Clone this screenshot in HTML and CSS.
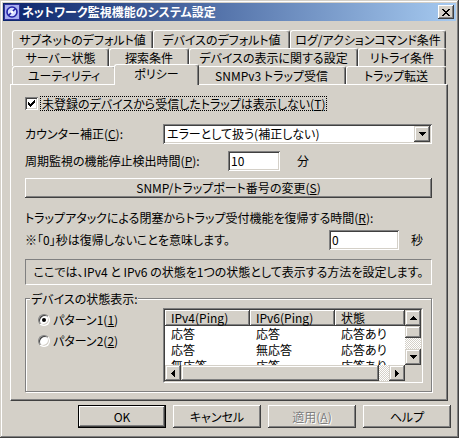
FILE: index.html
```html
<!DOCTYPE html>
<html lang="ja">
<head>
<meta charset="utf-8">
<title>ネットワーク監視機能のシステム設定</title>
<link rel="stylesheet" href="styles.css">
</head>
<body>
<div class="window">
  <div class="titlebar">
    <svg class="app-icon" viewBox="0 0 16 16" width="16" height="16">
      <rect x="0.5" y="0.5" width="15" height="15" fill="#a8aef0" stroke="#30309a"/>
      <circle cx="8" cy="8" r="5" fill="#d6dcff" stroke="#2424a8" stroke-width="1.6"/>
      <path d="M4.5 11.5 L11.5 4.5" stroke="#2424a8" stroke-width="1.6"/>
      <circle cx="8" cy="8" r="1.6" fill="#ffffff"/>
    </svg>
    <span class="title">ネットワーク監視機能のシステム設定</span>
    <span class="close-btn">
      <svg viewBox="0 0 8 7" width="8" height="7"><path d="M0 0h2v1h1v1h2V1h1V0h2v1H7v1H6v1H5v1h1v1h1v1h1v1H6V6H5V5H3v1H2v1H0V6h1V5h1V4h1V3H2V2H1V1H0Z" fill="#000"/></svg>
    </span>
  </div>
  <div class="client">
    <div class="tabs">
      <div class="tab-row">
        <div class="tab w141">サブネットのデフォルト値</div>
        <div class="tab w137">デバイスのデフォルト値</div>
        <div class="tab w156">ログ/アクションコマンド条件</div>
      </div>
      <div class="tab-row">
        <div class="tab w97">サーバー状態</div>
        <div class="tab w80">探索条件</div>
        <div class="tab w169">デバイスの表示に関する設定</div>
        <div class="tab w88">リトライ条件</div>
      </div>
      <div class="tab-row">
        <div class="tab w104">ユーティリティ</div>
        <div class="tab w81 selected">ポリシー</div>
        <div class="tab w149">SNMPv3 トラップ受信</div>
        <div class="tab w100">トラップ転送</div>
      </div>
    </div>

    <div class="panel">
      <div class="check-row">
        <span class="checkbox">
          <svg viewBox="0 0 7 7" width="7" height="7"><path d="M0 2h1v3H0Z M1 3h1v3H1Z M2 4h1v3H2Z M3 3h1v3H3Z M4 2h1v3H4Z M5 1h1v3H5Z M6 0h1v3H6Z" fill="#000"/></svg>
        </span>
        <span class="check-label">未登録のデバイスから受信したトラップは表示しない(<u>T</u>)</span>
      </div>

      <div class="form-row combo-row">
        <span class="lbl lbl-combo">カウンター補正(<u>C</u>):</span>
        <div class="combo">
          <span class="combo-text">エラーとして扱う(補正しない)</span>
          <span class="sb-btn combo-btn">
            <svg viewBox="0 0 7 4" width="7" height="4"><path d="M0 0h7v1h-1v1h-1v1h-1v1H3V3H2V2H1V1H0Z" fill="#000"/></svg>
          </span>
        </div>
      </div>

      <div class="form-row period-row">
        <span class="lbl lbl-period">周期監視の機能停止検出時間(<u>P</u>):</span>
        <div class="field f-period">10</div>
        <span class="unit-min">分</span>
      </div>

      <div class="btn wide-btn">SNMP/トラップポート番号の変更(<u>S</u>)</div>

      <div class="text-line">トラップアタックによる閉塞からトラップ受付機能を復帰する時間(<u>R</u>):</div>

      <div class="form-row recover-row">
        <span class="lbl lbl-recover">※「0」秒は復帰しないことを意味します。</span>
        <div class="field f-recover">0</div>
        <span class="unit-sec">秒</span>
      </div>

      <div class="info">ここでは、IPv4 と IPv6 の状態を1つの状態として表示する方法を設定します。</div>

      <div class="group">
        <div class="group-title">デバイスの状態表示:</div>
        <div class="group-body">
          <div class="radios">
            <div class="radio-row"><span class="radio checked"></span><span class="radio-label">パターン1(<u>1</u>)</span></div>
            <div class="radio-row"><span class="radio"></span><span class="radio-label">パターン2(<u>2</u>)</span></div>
          </div>
          <div class="lv">
            <div class="lv-inner">
              <div class="lv-body">
                <div class="lv-head">
                  <span>IPv4(Ping)</span><span>IPv6(Ping)</span><span>状態</span>
                </div>
                <div class="lv-row"><span>応答</span><span>応答</span><span>応答あり</span></div>
                <div class="lv-row"><span>応答</span><span>無応答</span><span>応答あり</span></div>
                <div class="lv-row"><span>無応答</span><span>応答</span><span>応答あり</span></div>
              </div>
              <div class="vscroll">
                <span class="sb-btn sb-v">
                  <svg viewBox="0 0 7 4" width="7" height="4"><path d="M3 0h1v1h1v1h1v1h1v1H0V3h1V2h1V1h1Z" fill="#000"/></svg>
                </span>
                <span class="sb-thumb v-thumb"></span>
                <span class="sb-track"></span>
                <span class="sb-btn sb-v">
                  <svg viewBox="0 0 7 4" width="7" height="4"><path d="M0 0h7v1h-1v1h-1v1h-1v1H3V3H2V2H1V1H0Z" fill="#000"/></svg>
                </span>
              </div>
              <div class="hscroll">
                <span class="sb-btn sb-h">
                  <svg viewBox="0 0 4 7" width="4" height="7"><path d="M0 3v1h1v1h1v1h1v1h1V0H3v1H2v1H1v1Z" fill="#000"/></svg>
                </span>
                <span class="sb-thumb h-thumb"></span>
                <span class="sb-track"></span>
                <span class="sb-btn sb-h">
                  <svg viewBox="0 0 4 7" width="4" height="7"><path d="M0 0v7h1V6h1V5h1V4h1V3H3V2H2V1H1V0Z" fill="#000"/></svg>
                </span>
              </div>
              <div class="corner"></div>
            </div>
          </div>
        </div>
      </div>
    </div>

    <div class="buttons">
      <div class="btn dlg-btn default">OK</div>
      <div class="btn dlg-btn">キャンセル</div>
      <div class="btn dlg-btn disabled">適用(<u>A</u>)</div>
      <div class="btn dlg-btn">ヘルプ</div>
    </div>
  </div>
</div>
</body>
</html>
```

FILE: styles.css
```css
* { box-sizing: border-box; }
html, body { margin: 0; padding: 0; }
body {
  width: 459px;
  height: 438px;
  overflow: hidden;
  background: #d4d0c8;
  font-family: "Noto Sans CJK JP", "Noto Sans", sans-serif;
  font-size: 12px;
  line-height: 14px;
  color: #000;
  font-feature-settings: "palt";
}
u {
  text-decoration: underline;
  text-decoration-thickness: 1px;
  text-underline-offset: 1px;
}

/* window frame */
.window {
  width: 459px;
  height: 438px;
  padding: 3px;
  background: #d4d0c8;
  box-shadow: inset -1px -1px #404040, inset 1px 1px #d4d0c8,
              inset -2px -2px #808080, inset 2px 2px #ffffff;
  display: flex;
  flex-direction: column;
}
.titlebar {
  flex: none;
  height: 18px;
  display: flex;
  align-items: center;
  padding: 0 2px 0 1px;
  background: linear-gradient(to right, #0a246a, #a6caf0);
}
.app-icon { flex: none; display: block; }
.title {
  flex: 1;
  margin-left: 2px;
  color: #fff;
  font-weight: bold;
  white-space: nowrap;
}
.close-btn {
  flex: none;
  width: 16px;
  height: 14px;
  display: flex;
  align-items: center;
  justify-content: center;
  background: #d4d0c8;
  box-shadow: inset -1px -1px #404040, inset 1px 1px #ffffff,
              inset -2px -2px #808080, inset 2px 2px #d4d0c8;
}
.close-btn svg { display: block; }

.client {
  flex: 1;
  padding: 9px 8px 0 7px;
}

/* tabs */
.tabs { margin: 0 2px; }
.tab-row { display: flex; height: 18px; }
.tab {
  flex: none;
  height: 18px;
  background: #d4d0c8;
  border-top: 1px solid #fff;
  border-left: 1px solid #fff;
  border-right: 1px solid #404040;
  border-radius: 3px 3px 0 0;
  box-shadow: inset -1px 0 #808080;
  display: flex;
  align-items: center;
  justify-content: center;
  white-space: nowrap;
}
.tab.selected {
  position: relative;
  z-index: 1;
  height: 21px;
  margin: -2px -2px -1px -2px;
  padding-bottom: 3px;
}
.w141 { width: 141px; }
.w137 { width: 137px; }
.w156 { width: 156px; }
.w97 { width: 97px; }
.w80 { width: 80px; }
.w169 { width: 169px; }
.w88 { width: 88px; }
.w104 { width: 104px; }
.w81 { width: 85px; }
.w149 { width: 149px; }
.w100 { width: 100px; }

/* panel */
.panel {
  height: 317px;
  border: 1px solid;
  border-color: #fff #404040 #404040 #fff;
  box-shadow: inset -1px -1px #808080;
  padding: 0 15px 0 14px;
  display: flex;
  flex-direction: column;
}
.panel > * { flex: none; }

.check-row {
  margin-top: 11px;
  height: 15px;
  display: flex;
  align-items: center;
}
.checkbox {
  flex: none;
  width: 13px;
  height: 13px;
  background: #fff;
  box-shadow: inset 1px 1px #808080, inset -1px -1px #ffffff,
              inset 2px 2px #404040, inset -2px -2px #d4d0c8;
  display: flex;
  align-items: center;
  justify-content: center;
}
.checkbox svg { display: block; }
.check-label {
  margin-left: 3px;
  padding: 0 1px;
  line-height: 13px;
  outline: 1px dotted #000;
  white-space: nowrap;
}

.form-row {
  height: 20px;
  display: flex;
  align-items: center;
}
.lbl { flex: none; white-space: nowrap; }
.combo-row { margin-top: 13px; }
.lbl-combo { width: 138px; }
.combo {
  flex: 1;
  height: 20px;
  padding: 2px;
  background: #fff;
  box-shadow: inset 1px 1px #808080, inset -1px -1px #ffffff,
              inset 2px 2px #404040, inset -2px -2px #d4d0c8;
  display: flex;
  align-items: center;
}
.combo-text { flex: 1; padding-left: 2px; white-space: nowrap; }
.combo-btn { width: 16px; height: 16px; }

.period-row { margin-top: 7px; }
.lbl-period { width: 203px; }
.field {
  flex: none;
  height: 20px;
  padding: 0 3px;
  background: #fff;
  box-shadow: inset 1px 1px #808080, inset -1px -1px #ffffff,
              inset 2px 2px #404040, inset -2px -2px #d4d0c8;
  display: flex;
  align-items: center;
}
.f-period { width: 52px; }
.unit-min { margin-left: 17px; }

.btn {
  background: #d4d0c8;
  box-shadow: inset -1px -1px #404040, inset 1px 1px #ffffff,
              inset -2px -2px #808080, inset 2px 2px #d4d0c8;
  display: flex;
  align-items: center;
  justify-content: center;
  white-space: nowrap;
}
.wide-btn { margin-top: 7px; height: 20px; }

.text-line { margin-top: 13px; height: 14px; white-space: nowrap; }

.recover-row { margin-top: 5px; }
.lbl-recover { width: 304px; }
.f-recover { width: 70px; }
.unit-sec { margin-left: 12px; }

.info {
  margin-top: 9px;
  height: 26px;
  border: 1px solid;
  border-color: #808080 #fff #fff #808080;
  display: flex;
  align-items: center;
  justify-content: center;
  white-space: nowrap;
}

/* group box */
.group {
  margin-top: 13px;
  height: 94px;
  border: 1px solid #808080;
  box-shadow: inset 1px 1px #ffffff, 1px 1px #ffffff;
}
.group-title {
  width: fit-content;
  height: 14px;
  margin: -7px 0 0 4px;
  padding: 0 1px;
  background: #d4d0c8;
  white-space: nowrap;
}
.group-body {
  margin-top: 2px;
  display: flex;
}
.radios {
  flex: none;
  width: 137px;
  padding: 5px 0 0 12px;
}
.radio-row {
  height: 14px;
  display: flex;
  align-items: center;
}
.radio-row + .radio-row { margin-top: 7px; }
.radio {
  flex: none;
  width: 12px;
  height: 12px;
  border-radius: 50%;
  background: #fff;
  border: 1px solid;
  border-color: #808080 #ffffff #ffffff #808080;
  box-shadow: inset 1px 1px #404040, inset -1px -1px #d4d0c8;
}
.radio.checked::after {
  content: "";
  display: block;
  width: 4px;
  height: 4px;
  margin: 3px;
  border-radius: 50%;
  background: #000;
}
.radio-label { margin-left: 3px; white-space: nowrap; }

/* list view */
.lv {
  flex: none;
  width: 260px;
  height: 75px;
  border: 1px solid;
  border-color: #808080 #fff #fff #808080;
}
.lv-inner {
  height: 100%;
  border: 1px solid;
  border-color: #404040 #d4d0c8 #d4d0c8 #404040;
  display: grid;
  grid-template-columns: 240px 16px;
  grid-template-rows: 55px 16px;
}
.lv-body { background: #fff; overflow: hidden; }
.lv-head, .lv-row {
  display: grid;
  grid-template-columns: 85px 85px 70px;
}
.lv-head > span {
  height: 16px;
  padding-left: 6px;
  background: #d4d0c8;
  box-shadow: inset -1px -1px #404040, inset 1px 1px #ffffff,
              inset -2px -2px #808080;
  display: flex;
  align-items: center;
  white-space: nowrap;
}
.lv-row > span {
  height: 16px;
  padding-left: 6px;
  display: flex;
  align-items: center;
  white-space: nowrap;
}
.vscroll, .hscroll {
  display: flex;
  background-color: #fff;
  background-image: repeating-conic-gradient(#d4d0c8 0 25%, #ffffff 0 50%);
  background-size: 2px 2px;
}
.vscroll { flex-direction: column; }
.sb-btn {
  flex: none;
  background: #d4d0c8;
  box-shadow: inset -1px -1px #404040, inset 1px 1px #d4d0c8,
              inset -2px -2px #808080, inset 2px 2px #ffffff;
  display: flex;
  align-items: center;
  justify-content: center;
}
.sb-btn svg { display: block; }
.sb-v { width: 16px; height: 16px; }
.sb-h { width: 16px; height: 16px; }
.sb-thumb {
  flex: none;
  background: #d4d0c8;
  box-shadow: inset -1px -1px #404040, inset 1px 1px #d4d0c8,
              inset -2px -2px #808080, inset 2px 2px #ffffff;
}
.v-thumb { height: 12px; }
.h-thumb { width: 198px; }
.sb-track { flex: 1; }
.corner { background: #d4d0c8; }

/* dialog buttons */
.buttons {
  margin-top: 4px;
  padding-left: 68px;
  display: flex;
  gap: 7px;
}
.dlg-btn { flex: none; width: 88px; height: 23px; }
.dlg-btn.default { border: 1px solid #000; }
.dlg-btn.disabled { color: #808080; text-shadow: 1px 1px #fff; }
```
